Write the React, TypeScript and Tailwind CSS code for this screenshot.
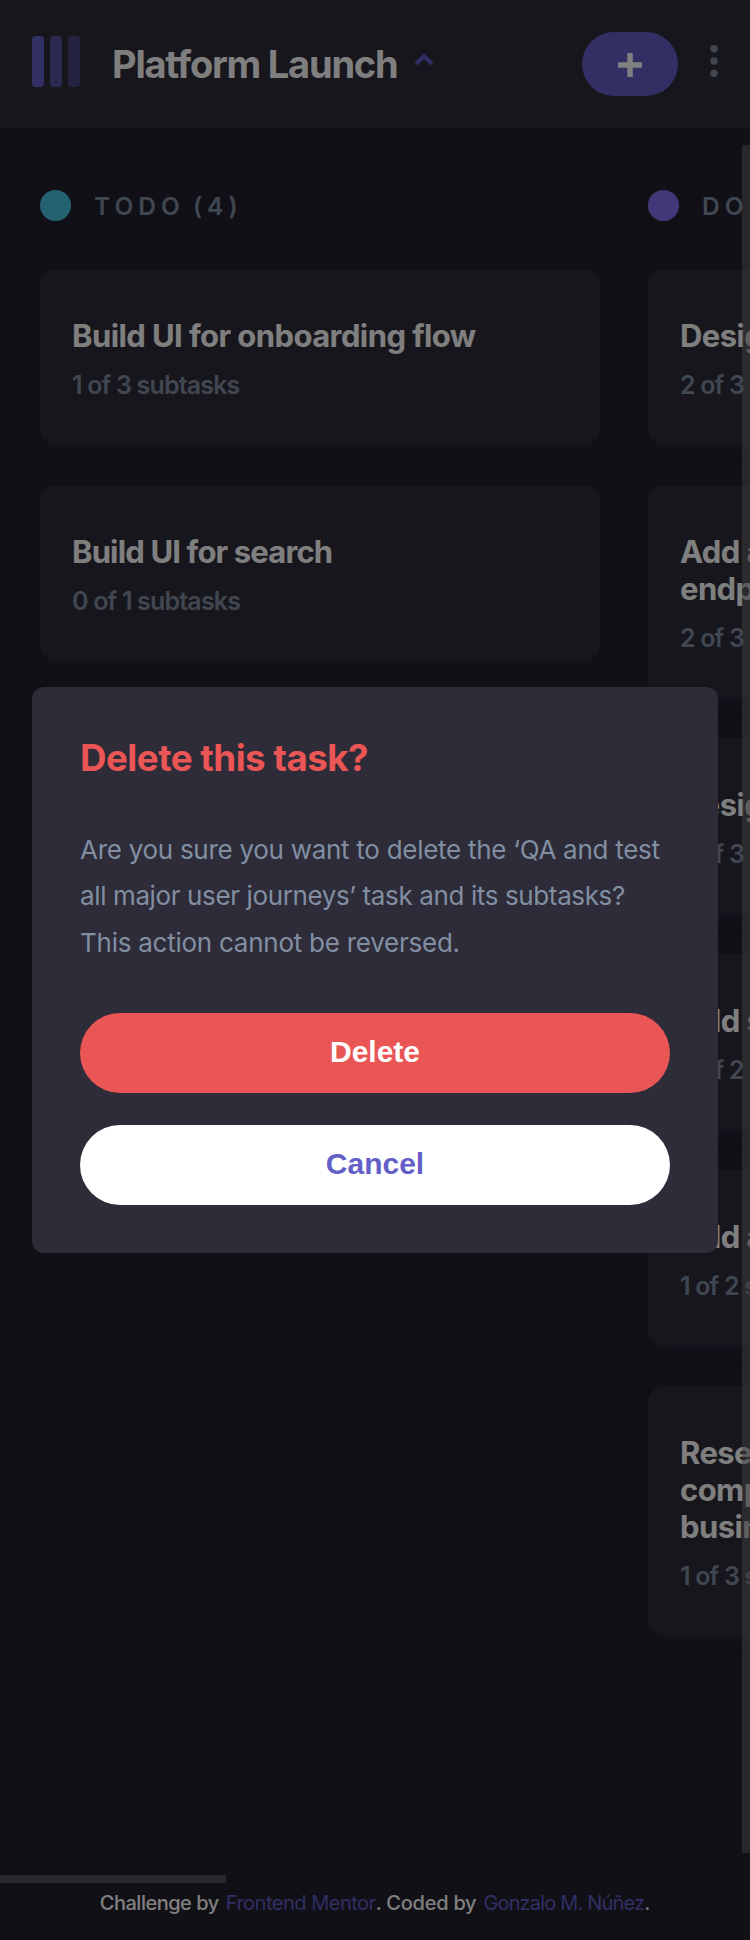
import React from "react";

type Task = { lines: string[]; subtasks: string; tight?: boolean };
type Column = { name: string; count: number; dot: string; tasks: Task[] };

const columns: Column[] = [
  {
    name: "TODO",
    count: 4,
    dot: "bg-[#49c4e5]",
    tasks: [
      { lines: ["Build UI for onboarding flow"], subtasks: "1 of 3 subtasks" },
      { lines: ["Build UI for search"], subtasks: "0 of 1 subtasks", tight: true },
    ],
  },
  {
    name: "DOING",
    count: 6,
    dot: "bg-[#8471f2]",
    tasks: [
      { lines: ["Design settings and search pages"], subtasks: "2 of 3 subtasks" },
      { lines: ["Add account management", "endpoints"], subtasks: "2 of 3 subtasks" },
      { lines: ["Design onboarding flow"], subtasks: "2 of 3 subtasks" },
      { lines: ["Add search endpoints"], subtasks: "2 of 2 subtasks" },
      { lines: ["Add authentication endpoints"], subtasks: "1 of 2 subtasks" },
      {
        lines: ["Research pricing points of various", "competitors and trial different", "business models"],
        subtasks: "1 of 3 subtasks",
      },
    ],
  },
];

function Header() {
  return (
    <header className="flex h-32 shrink-0 items-center bg-[#2f2d39] pl-8 pr-8">
      <div className="flex h-[51px] -translate-y-[3px] gap-1.5">
        <span className="w-3 rounded bg-[#635fc7]" />
        <span className="w-3 rounded bg-[#635fc7]/75" />
        <span className="w-3 rounded bg-[#635fc7]/50" />
      </div>
      <h1 className="ml-8 w-[302px] whitespace-nowrap text-[38px] font-bold leading-[48px] tracking-[-1.21px] text-white">
        Platform Launch
      </h1>
      <svg className="-mt-2.5 h-3.5 w-5" viewBox="0 0 10 7" fill="none" stroke="#635fc7" strokeWidth="2">
        <path d="M9 6 5 2 1 6" />
      </svg>
      <button className="ml-auto flex h-16 w-24 items-center justify-center rounded-full bg-[#635fc7]">
        <svg className="mt-0.5 size-6" viewBox="0 0 12 12" fill="#fff">
          <path d="M7.368 12V7.344H12V4.632H7.368V0H4.656v4.632H0v2.712h4.656V12z" />
        </svg>
      </button>
      <svg className="-mt-1.5 ml-8 h-8 w-2" viewBox="0 0 5 20" fill="#828fa3">
        <circle cx="2.5" cy="2.308" r="2.308" />
        <circle cx="2.5" cy="10" r="2.308" />
        <circle cx="2.5" cy="17.692" r="2.308" />
      </svg>
    </header>
  );
}

function TaskCard({ task }: { task: Task }) {
  return (
    <article className="rounded-2xl bg-[#2f2d39] px-8 pb-[43px] pt-12 shadow-[0_8px_12px_rgba(54,78,126,0.1)]">
      <h3
        className={
          task.tight
            ? "whitespace-nowrap text-[31px] font-bold leading-[37px] tracking-[-0.85px] text-white"
            : "whitespace-nowrap text-[31px] font-bold leading-[37px] tracking-[-0.58px] text-white"
        }
      >
        {task.lines.map((line) => (
          <span key={line} className="block">
            {line}
          </span>
        ))}
      </h3>
      <p className="mt-[15px] whitespace-nowrap text-[25px] font-semibold leading-[33px] tracking-[-0.83px] text-[#828fa3]">
        {task.subtasks}
      </p>
    </article>
  );
}

function Board() {
  return (
    <main className="relative h-[1755px] shrink-0 overflow-hidden">
      <div className="flex w-max gap-12 pl-10 pt-[61px]">
        {columns.map((column) => (
          <section key={column.name} className="w-[560px]">
            <h2 className="flex h-8 items-center gap-[23px] text-[24.5px] font-semibold leading-8 tracking-[5px] text-[#828fa3]">
              <span className={`size-[31px] rounded-full ${column.dot}`} />
              <span className="pt-px [word-spacing:-3px]">
                {column.name} ({column.count})
              </span>
            </h2>
            <div className="mt-12 flex flex-col gap-10">
              {column.tasks.map((task) => (
                <TaskCard key={task.lines[0]} task={task} />
              ))}
            </div>
          </section>
        ))}
      </div>
      <div className="absolute right-0 top-[17px] h-[1708px] w-2 bg-[#808080]/50" />
      <div className="absolute bottom-0 left-0 h-2 w-[226px] bg-[#808080]/50" />
    </main>
  );
}

function Footer() {
  return (
    <footer className="flex justify-center whitespace-pre pt-1.5 text-[20px] font-medium leading-7 text-white">
      <span className="mr-[7px] tracking-[-0.5px]">Challenge by</span>
      <a className="font-normal tracking-[-0.49px] text-[#635fc7]">Frontend Mentor</a>
      <span className="mr-[7px] tracking-[-0.25px]">. Coded by</span>
      <a className="font-normal tracking-[-0.83px] text-[#635fc7]">Gonzalo M. Núñez</a>
      <span>.</span>
    </footer>
  );
}

function DeleteDialog() {
  return (
    <div className="absolute inset-0 flex items-center bg-black/50 px-8">
      <div role="dialog" className="w-full rounded-xl bg-[#2d2c38] p-12">
        <h2 className="text-[36.7px] font-bold leading-[45px] tracking-[-0.5px] text-[#ea5555]">Delete this task?</h2>
        <p className="mt-[47px] whitespace-nowrap text-[26px] leading-[46.4px] text-[#828fa3]">
          <span className="block tracking-[-0.28px]">Are you sure you want to delete the ‘QA and test</span>
          <span className="block tracking-[-0.38px]">all major user journeys’ task and its subtasks?</span>
          <span className="block tracking-[-0.25px]">This action cannot be reversed.</span>
        </p>
        <div className="mt-[47px] flex flex-col gap-8 font-['Liberation_Sans',Arial,sans-serif] text-[30px] font-bold">
          <button className="h-20 rounded-full bg-[#ea5555] pb-1 text-white">Delete</button>
          <button className="h-20 rounded-full bg-white pb-1 text-[#635fc7]">Cancel</button>
        </div>
      </div>
    </div>
  );
}

export default function App() {
  return (
    <div className="relative flex h-[1940px] w-[750px] flex-col overflow-hidden bg-[#20212c] font-['Inter',sans-serif]">
      <Header />
      <Board />
      <Footer />
      <DeleteDialog />
    </div>
  );
}
